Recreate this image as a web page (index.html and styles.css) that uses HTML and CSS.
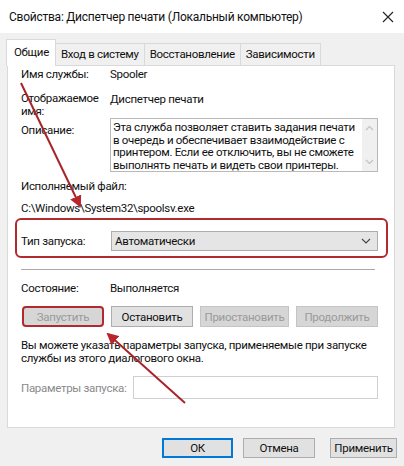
FILE: index.html
```html
<!DOCTYPE html>
<html lang="ru">
<head>
  <meta charset="UTF-8" />
  <meta name="viewport" content="width=device-width, initial-scale=1.0" />
  <title>Свойства: Диспетчер печати</title>
  <link rel="stylesheet" href="styles.css">
</head>
<body>
<div class="window">

  <div class="titlebar">
    <span class="title">Свойства: Диспетчер печати (Локальный компьютер)</span>
    <svg class="close" width="12" height="12" viewBox="0 0 12 12">
      <path d="M1 1 L11 11 M11 1 L1 11" stroke="#222" stroke-width="1.1" fill="none" />
    </svg>
  </div>

  <div class="dialog">
    <div class="tabs">
      <div class="tab active">Общие</div>
      <div class="tab">Вход в систему</div>
      <div class="tab">Восстановление</div>
      <div class="tab">Зависимости</div>
    </div>

    <div class="panel">
      <div class="row r-name">
        <span class="label">Имя службы:</span>
        <span class="value">Spooler</span>
      </div>

      <div class="row r-display">
        <span class="label">Отображаемое<br>имя:</span>
        <span class="value">Диспетчер печати</span>
      </div>

      <div class="row r-desc">
        <span class="label">Описание:</span>
        <div class="textbox">
          <div class="textbox-text">Эта служба позволяет ставить задания печати<br>в очередь и обеспечивает взаимодействие с<br>принтером. Если ее отключить, вы не сможете<br>выполнять печать и видеть свои принтеры.</div>
          <div class="scroll">
            <svg width="9" height="6" viewBox="0 0 9 6"><path d="M1 5 L4.5 1.5 L8 5" stroke="#c2c2c2" stroke-width="1.2" fill="none"/></svg>
            <svg width="9" height="6" viewBox="0 0 9 6"><path d="M1 1 L4.5 4.5 L8 1" stroke="#c2c2c2" stroke-width="1.2" fill="none"/></svg>
          </div>
        </div>
      </div>

      <div class="line r-exe">Исполняемый файл:</div>
      <div class="line r-path">C:\Windows\System32\spoolsv.exe</div>

      <div class="row r-startup marked-box">
        <span class="label">Тип запуска:</span>
        <div class="select">
          <span>Автоматически</span>
          <svg width="10" height="6" viewBox="0 0 10 6"><path d="M1 1 L5 5 L9 1" stroke="#444" stroke-width="1.1" fill="none"/></svg>
        </div>
      </div>

      <div class="separator"></div>

      <div class="row r-state">
        <span class="label">Состояние:</span>
        <span class="value">Выполняется</span>
      </div>

      <div class="buttons">
        <button class="btn disabled marked">Запустить</button>
        <button class="btn">Остановить</button>
        <button class="btn disabled wide">Приостановить</button>
        <button class="btn disabled">Продолжить</button>
      </div>

      <p class="hint">Вы можете указать параметры запуска, применяемые при запуске<br>службы из этого диалогового окна.</p>

      <div class="row r-params">
        <span class="label muted">Параметры запуска:</span>
        <div class="input"></div>
      </div>
    </div>

    <div class="actions">
      <button class="btn default">ОК</button>
      <button class="btn cancel">Отмена</button>
      <button class="btn apply">Применить</button>
    </div>
  </div>

  <!-- стрелки поверх окна -->
  <svg class="annotations" width="404" height="466" viewBox="0 0 404 466">
    <defs>
      <marker id="head" markerWidth="6" markerHeight="6" refX="5" refY="3" orient="auto" markerUnits="strokeWidth">
        <path d="M0 0 L6 3 L0 6 Z" fill="#b8262c" />
      </marker>
    </defs>
    <line x1="21" y1="83" x2="80" y2="206" stroke="#a8232a" stroke-width="2" marker-end="url(#head)" />
    <line x1="185" y1="403" x2="108" y2="334" stroke="#a8232a" stroke-width="2" marker-end="url(#head)" />
  </svg>
</div>
</body>
</html>
```

FILE: styles.css
```css
body {
  margin: 0;
  font-family: Roboto, "Noto Sans", sans-serif;
  font-size: 11.5px;
  letter-spacing: -0.3px;
  color: #111;
}

.window {
  position: relative;
  width: 404px;
  height: 466px;
  background: #f0f0f0;
  overflow: hidden;
}

.titlebar {
  height: 33px;
  background: #fff;
  display: flex;
  align-items: center;
  justify-content: space-between;
  padding: 0 10px 0 9px;
  box-sizing: border-box;
}

.title {
  font-size: 12px;
  letter-spacing: -0.25px;
  color: #111;
}

.dialog {
  padding-top: 6px;
}

.tabs {
  display: flex;
  align-items: flex-end;
  padding-left: 6px;
  height: 26px;
}

.tab {
  height: 22px;
  line-height: 21px;
  padding: 0 5px;
  border: 1px solid #d9d9d9;
  border-bottom: none;
  border-left: none;
  box-sizing: border-box;
  background: #f0f0f0;
}

.tab.active {
  height: 27px;
  line-height: 24px;
  padding: 0 6px 0 7px;
  border-left: 1px solid #d9d9d9;
  background: #fff;
  margin-bottom: -1px;
  position: relative;
  z-index: 1;
}

.panel {
  margin: 0 9px 0 7px;
  background: #fff;
  border: 1px solid #d9d9d9;
  padding: 1px 16px 26px 13px;
  height: 363px;
  box-sizing: border-box;
}

.row {
  display: flex;
  align-items: flex-start;
}

.label {
  width: 89px;
  flex: none;
  line-height: 14px;
}

.value {
  line-height: 14px;
}

.r-display {
  margin-top: 11px;
}

.r-display .label {
  line-height: 13px;
}

.r-desc .label {
  margin-top: 5px;
}

.textbox {
  flex: 1;
  height: 54px;
  border: 1px solid #b9b9b9;
  box-sizing: border-box;
  display: flex;
}

.textbox-text {
  flex: 1;
  padding: 2px 0 0 2px;
  line-height: 12.5px;
  white-space: nowrap;
}

.scroll {
  width: 15px;
  background: #f0f0f0;
  display: flex;
  flex-direction: column;
  align-items: center;
  justify-content: space-between;
  padding: 6px 0 6px;
}

.line {
  line-height: 14px;
}

.r-exe {
  margin-top: 7px;
}

.r-path {
  margin-top: 8px;
}

.marked-box {
  border: 2px solid #b02a2e;
  border-radius: 6px;
  margin: 3px -10px 0 -6px;
  padding: 11px 8px 5px 4px;
  align-items: center;
}

.r-startup .label {
  width: 90px;
}

.select {
  flex: 1;
  height: 20px;
  background: #e5e5e5;
  border: 1px solid #adadad;
  box-sizing: border-box;
  display: flex;
  align-items: center;
  justify-content: space-between;
  padding: 0 6px 0 3px;
}

.separator {
  height: 1px;
  background: #a8a8a8;
  margin: 11px 3px 0 0;
}

.r-state {
  margin-top: 11px;
}

.buttons {
  display: flex;
  gap: 7px;
  margin-top: 11px;
  padding-left: 1px;
}

.btn {
  font-family: inherit;
  font-size: 11.5px;
  letter-spacing: -0.3px;
  color: #111;
  height: 21px;
  width: 82px;
  padding: 0;
  background: #e1e1e1;
  border: 1px solid #adadad;
  box-sizing: border-box;
}

.btn.wide {
  width: 89px;
}

.btn.disabled {
  background: #d6d6d6;
  border-color: #c4c4c4;
  color: #9a9a9a;
}

.btn.marked {
  border: 2px solid #b02a2e;
  border-radius: 4px;
}

.hint {
  margin: 12px 0 0;
  line-height: 13px;
  white-space: nowrap;
}

.r-params {
  margin-top: 11px;
  align-items: center;
}

.muted {
  color: #8a8a8a;
  width: 112px;
}

.input {
  flex: 1;
  height: 23px;
  border: 1px solid #d0d0d0;
  box-sizing: border-box;
}

.actions {
  display: flex;
  padding: 10px 0 0 162px;
}

.actions .btn {
  width: 72px;
  height: 20px;
}

.actions .btn.default {
  width: 71px;
  border: 2px solid #0078d7;
}

.actions .btn.cancel {
  margin-left: 10px;
}

.actions .btn.apply {
  width: 67px;
  margin-left: 15px;
}

.annotations {
  position: absolute;
  left: 0;
  top: 0;
  pointer-events: none;
}
```
